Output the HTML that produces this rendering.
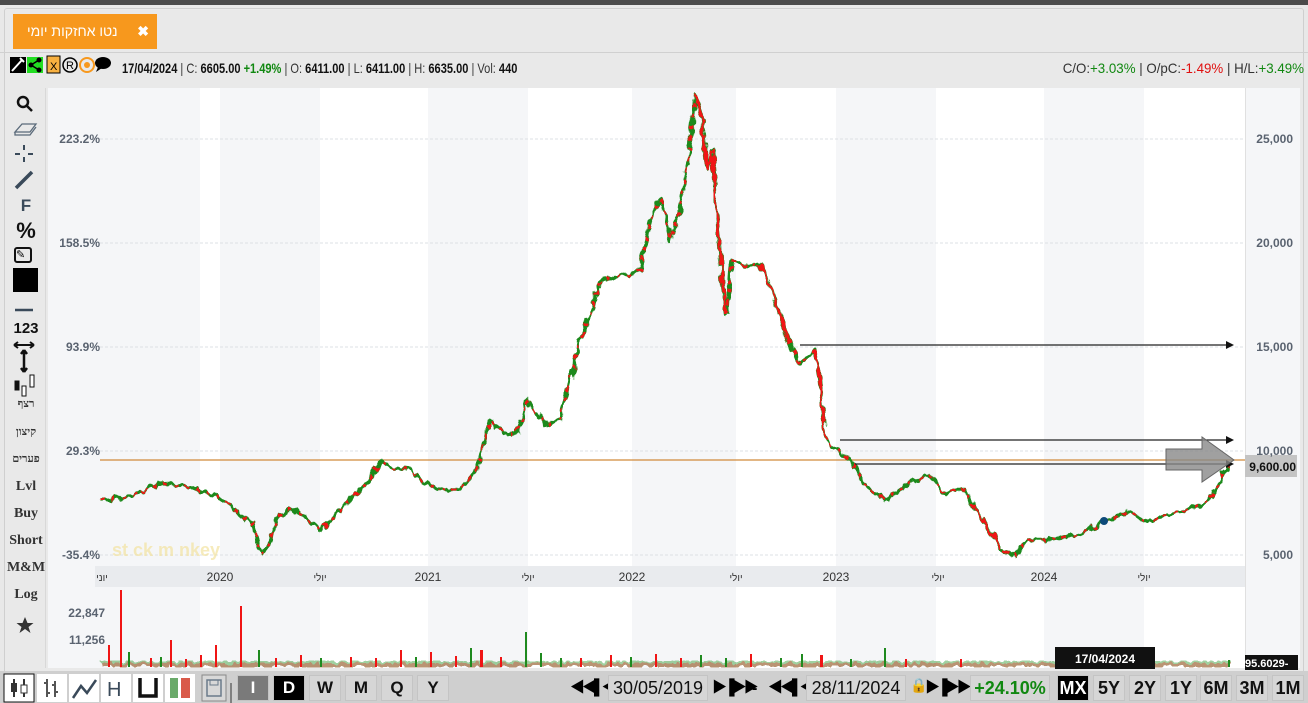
<!DOCTYPE html>
<html><head><meta charset="utf-8"><style>
*{margin:0;padding:0;box-sizing:border-box}
body{width:1308px;height:703px;overflow:hidden;background:#e8e8e8;font-family:"Liberation Sans","Noto Sans CJK JP",sans-serif;position:relative}
.abs{position:absolute}
.topbar{left:0;top:0;width:1308px;height:5px;background:#4a4a4a}
.tab{left:13px;top:14px;width:144px;height:35px;background:#f7981d;color:#fff;font-size:14px;line-height:35px}
.info{top:60px;font-size:14px;color:#333;white-space:nowrap}
.info b{color:#111}
.info .g{color:#118811}.info .r{color:#e01010}
.lt{left:6px;width:40px;text-align:center;font-family:"Liberation Serif",serif;font-weight:bold;font-size:14px;color:#333}
.bb{top:675px;height:26px;background:#d6d6d6;border:1px solid #c4c4c4;font-weight:bold;font-size:17px;text-align:center;line-height:24px;color:#111}
</style></head><body>
<div class="abs topbar"></div>
<div class="abs" style="left:4px;top:8px;width:1300px;height:695px;border:1px solid #cfcfcf;border-radius:3px;background:#e9e9e9"></div>
<div class="abs tab"><span style="position:absolute;left:14px">נטו אחזקות יומי</span><span style="position:absolute;right:8px;font-weight:bold">✖</span></div>
<div class="abs" style="left:0;top:52px;width:1308px;height:1px;background:#d0d0d0"></div>
<svg class="abs" style="left:10px;top:55px" width="112" height="20">
<rect x="0" y="2" width="16" height="16" fill="#000"/><path d="M2 16 L12 5 M10 3 l4 4" stroke="#fff" stroke-width="2"/>
<rect x="17" y="2" width="16" height="16" fill="#22dd22"/><circle cx="21" cy="10" r="2.5"/><circle cx="29" cy="5" r="2.5"/><circle cx="29" cy="15" r="2.5"/><path d="M21 10L29 5M21 10L29 15" stroke="#000" stroke-width="1.5"/>
<rect x="37" y="1" width="13" height="17" fill="#f7b040" stroke="#000"/><text x="40" y="15" font-size="11" font-family="Liberation Sans">X</text>
<circle cx="60" cy="10" r="7" fill="none" stroke="#000" stroke-width="1.5"/><text x="56" y="14" font-size="11" font-family="Liberation Sans">R</text>
<circle cx="77" cy="10" r="7" fill="none" stroke="#f7981d" stroke-width="2"/><circle cx="77" cy="10" r="3" fill="#f7981d"/>
<ellipse cx="93" cy="8" rx="8" ry="6"/><path d="M88 12 L86 17 L92 13z"/>
</svg>
<div class="abs info" style="left:122px;transform:scaleX(0.79);transform-origin:0 0"><b>17/04/2024</b> | C: <b>6605.00</b> <b class="g">+1.49%</b> | O: <b>6411.00</b> | L: <b>6411.00</b> | H: <b>6635.00</b> | Vol: <b>440</b></div>
<div class="abs info" style="right:4px;transform:scaleX(0.95);transform-origin:100% 0">C/O:<span class="g">+3.03%</span> | O/pC:<span class="r">-1.49%</span> | H/L:<span class="g">+3.49%</span></div>
<div class="abs" style="left:48px;top:88px;width:1252px;height:580px;background:#fff"></div>
<div class="abs" style="left:48px;top:88px;width:52px;height:580px;background:#f5f6f8"></div>
<div class="abs" style="left:1245px;top:88px;width:55px;height:580px;background:#f5f6f8;border-left:1px solid #e0e0e0"></div>
<svg class="abs" style="left:0;top:0" width="1308" height="703">
<defs>
<filter id="jit" x="-5%" y="-5%" width="110%" height="110%"><feTurbulence type="fractalNoise" baseFrequency="0.15 0.08" numOctaves="2" seed="3"/><feDisplacementMap in="SourceGraphic" scale="9" xChannelSelector="R" yChannelSelector="G"/></filter>
</defs>
<g fill="#f5f6f8">
<rect x="100" y="88" width="100" height="580"/><rect x="220" y="88" width="100" height="580"/><rect x="428" y="88" width="100" height="580"/><rect x="632" y="88" width="104" height="580"/><rect x="836" y="88" width="100" height="580"/><rect x="1044" y="88" width="100" height="580"/>
</g>
<rect x="95" y="566" width="1150" height="21" fill="#e9ebee"/>
<g stroke="#dde0e4" stroke-dasharray="3,2"><line x1="100" y1="139" x2="1245" y2="139"/><line x1="100" y1="243" x2="1245" y2="243"/><line x1="100" y1="347" x2="1245" y2="347"/><line x1="100" y1="451" x2="1245" y2="451"/><line x1="100" y1="555" x2="1245" y2="555"/></g>
<line x1="100" y1="460" x2="1245" y2="460" stroke="#d08a3a" stroke-width="1.2"/>
<g filter="url(#jit)">
<polyline id="pl" fill="none" stroke="#1f8a1f" stroke-width="3.5" stroke-linejoin="round" points="100,500 120,498 140,493 155,485 170,484 185,486 200,490 215,495 240,515 252,522 262,555 270,540 280,515 290,510 305,515 320,530 335,515 350,500 365,485 380,462 395,468 410,470 425,482 440,490 460,490 470,478 480,460 490,420 500,430 510,435 518,432 525,400 535,410 545,425 560,420 565,400 570,380 580,340 590,315 600,280 610,278 620,275 630,275 640,270 650,220 660,200 665,215 670,240 680,210 690,150 695,95 702,120 708,170 712,150 718,230 722,280 726,315 732,260 745,265 760,265 768,280 775,300 785,330 790,345 800,365 808,355 815,350 820,380 824,420 826,440 834,448 840,450 850,460 860,475 870,490 885,500 900,490 915,480 930,475 945,495 955,490 965,490 975,510 985,522 990,530 1000,550 1015,555 1030,540 1045,540 1060,538 1075,535 1090,530 1100,522 1110,520 1120,515 1130,512 1140,518 1150,522 1160,518 1170,515 1180,512 1190,508 1200,508 1210,500 1215,492 1220,480 1225,470 1230,462"/>
<polyline fill="none" stroke="#f01515" stroke-width="2.5" stroke-dasharray="4,7" stroke-linejoin="round" points="100,500 120,498 140,493 155,485 170,484 185,486 200,490 215,495 240,515 252,522 262,555 270,540 280,515 290,510 305,515 320,530 335,515 350,500 365,485 380,462 395,468 410,470 425,482 440,490 460,490 470,478 480,460 490,420 500,430 510,435 518,432 525,400 535,410 545,425 560,420 565,400 570,380 580,340 590,315 600,280 610,278 620,275 630,275 640,270 650,220 660,200 665,215 670,240 680,210 690,150 695,95 702,120 708,170 712,150 718,230 722,280 726,315 732,260 745,265 760,265 768,280 775,300 785,330 790,345 800,365 808,355 815,350 820,380 824,420 826,440 834,448 840,450 850,460 860,475 870,490 885,500 900,490 915,480 930,475 945,495 955,490 965,490 975,510 985,522 990,530 1000,550 1015,555 1030,540 1045,540 1060,538 1075,535 1090,530 1100,522 1110,520 1120,515 1130,512 1140,518 1150,522 1160,518 1170,515 1180,512 1190,508 1200,508 1210,500 1215,492 1220,480 1225,470 1230,462"/>
<polyline fill="none" stroke="#f01515" stroke-width="2.5" points="695,95 702,120 708,170 712,150 718,230 722,280 726,315"/>
<polyline fill="none" stroke="#f01515" stroke-width="2.5" points="760,265 768,280 775,300 785,330 790,345"/>
<polyline fill="none" stroke="#f01515" stroke-width="2.5" points="815,350 820,380 824,420 826,440"/>
<polyline fill="none" stroke="#f01515" stroke-width="2.5" points="975,510 985,522 990,530 1000,550"/>
</g>
<circle cx="1104" cy="521" r="4" fill="#0d4a7a"/>
<g stroke="#222" stroke-width="1.2"><line x1="800" y1="345" x2="1228" y2="345"/><line x1="840" y1="440" x2="1228" y2="440"/><line x1="855" y1="464" x2="1228" y2="464"/></g>
<g fill="#111"><path d="M1226 341l8 4-8 4z"/><path d="M1226 436l8 4-8 4z"/><path d="M1226 460l8 4-8 4z"/></g>
<path d="M1166 449 H1202 V437 L1234 460 L1202 482 V470 H1166z" fill="#888" fill-opacity="0.8" stroke="#666"/>
<rect x="1245" y="455" width="52" height="22" fill="#c4c4c4"/>
<text x="1296" y="471" text-anchor="end" font-size="12" font-weight="bold" fill="#111" font-family="Liberation Sans">9,600.00</text>
<g font-family="Liberation Sans" font-size="12" font-weight="bold" fill="#5a6370" text-anchor="end">
<text x="100" y="143">223.2%</text><text x="100" y="247">158.5%</text><text x="100" y="351">93.9%</text><text x="100" y="455">29.3%</text><text x="100" y="559">-35.4%</text>
<text x="1293" y="143">25,000</text><text x="1293" y="247">20,000</text><text x="1293" y="351">15,000</text><text x="1293" y="455">10,000</text><text x="1293" y="559">5,000</text>
<text x="105" y="617">22,847</text><text x="105" y="644">11,256</text>
</g>
<g font-family="Liberation Sans,Noto Sans CJK JP" font-size="12" fill="#333" text-anchor="middle">
<text x="102" y="581" font-size="10">יוני</text><text x="220" y="581">2020</text><text x="320" y="581" font-size="10">יולי</text><text x="428" y="581">2021</text><text x="528" y="581" font-size="10">יולי</text><text x="632" y="581">2022</text><text x="736" y="581" font-size="10">יולי</text><text x="836" y="581">2023</text><text x="938" y="581" font-size="10">יולי</text><text x="1044" y="581">2024</text><text x="1144" y="581" font-size="10">יולי</text>
</g>
<text x="112" y="556" font-family="Liberation Sans" font-size="18" font-weight="bold" fill="#f3e3a0" opacity="0.7">st  ck m  nkey</text>
<g filter="url(#jit)">
<rect x="100" y="661" width="1130" height="6" fill="#2a9a2a" opacity="0.45"/>
<rect x="100" y="663" width="1130" height="4" fill="#ee2020" opacity="0.35"/>
</g>
<g fill="#f01515">
<rect x="120" y="590" width="2" height="77"/><rect x="240" y="606" width="2" height="61"/><rect x="108" y="645" width="2" height="22"/><rect x="170" y="640" width="2" height="27"/><rect x="215" y="645" width="2" height="22"/><rect x="200" y="655" width="2" height="12"/><rect x="300" y="655" width="2" height="12"/><rect x="400" y="650" width="2" height="17"/><rect x="430" y="652" width="2" height="15"/><rect x="480" y="650" width="3" height="17"/><rect x="610" y="655" width="2" height="12"/><rect x="655" y="654" width="2" height="13"/><rect x="750" y="654" width="2" height="13"/><rect x="820" y="655" width="3" height="12"/><rect x="1060" y="658" width="2" height="9"/>
<rect x="150" y="658" width="2" height="9"/><rect x="185" y="659" width="2" height="8"/><rect x="275" y="658" width="2" height="9"/><rect x="350" y="657" width="2" height="10"/><rect x="375" y="658" width="2" height="9"/><rect x="455" y="656" width="2" height="11"/><rect x="500" y="657" width="2" height="10"/><rect x="580" y="658" width="2" height="9"/><rect x="680" y="658" width="2" height="9"/><rect x="905" y="659" width="2" height="8"/><rect x="960" y="659" width="2" height="8"/>
</g>
<g fill="#1f8a1f">
<rect x="525" y="632" width="2" height="35"/><rect x="128" y="652" width="2" height="15"/><rect x="258" y="650" width="2" height="17"/><rect x="470" y="648" width="2" height="19"/><rect x="540" y="653" width="2" height="14"/><rect x="700" y="655" width="2" height="12"/><rect x="801" y="654" width="2" height="13"/><rect x="884" y="648" width="2" height="19"/><rect x="1228" y="660" width="2" height="7"/>
<rect x="160" y="657" width="2" height="10"/><rect x="320" y="658" width="2" height="9"/><rect x="415" y="657" width="2" height="10"/><rect x="560" y="658" width="2" height="9"/><rect x="630" y="657" width="2" height="10"/><rect x="725" y="658" width="2" height="9"/><rect x="780" y="658" width="2" height="9"/><rect x="850" y="659" width="2" height="8"/>
</g>
<rect x="1055" y="647" width="100" height="22" fill="#111"/>
<text x="1105" y="663" text-anchor="middle" font-family="Liberation Sans" font-size="12" font-weight="bold" fill="#fff">17/04/2024</text>
<rect x="1245" y="655" width="53" height="15" fill="#111"/>
<text x="1245" y="667" font-family="Liberation Sans" font-size="11" font-weight="bold" fill="#fff">95.6029-</text>
<g fill="none" stroke="#111" stroke-width="2.5"><circle cx="23" cy="102" r="5"/><line x1="27" y1="106" x2="32" y2="111"/></g>
<path d="M15 132 L22 124 H36 L30 132z M15 132 v3 h15 l6-8" fill="none" stroke="#5a6a7a" stroke-width="1.3"/>
<g stroke="#3a4a5a" stroke-width="2"><line x1="24" y1="145" x2="24" y2="150"/><line x1="24" y1="157" x2="24" y2="162"/><line x1="15" y1="154" x2="20" y2="154"/><line x1="28" y1="154" x2="33" y2="154"/></g>
<line x1="16" y1="188" x2="32" y2="172" stroke="#3a4a5a" stroke-width="3.5"/>
<rect x="13" y="268" width="25" height="24" fill="#000"/>
<line x1="15" y1="310" x2="33" y2="310" stroke="#3a4a5a" stroke-width="2.5"/>
<path d="M14 345 H34 M14 345 l4-3 M14 345 l4 3 M34 345 l-4-3 M34 345 l-4 3" stroke="#111" stroke-width="2"/>
<path d="M24 350 V372 M24 350 l-3 4 M24 350 l3 4 M24 372 l-3-4 M24 372 l3-4" stroke="#111" stroke-width="2.5"/>
<g stroke="#111"><rect x="15" y="381" width="4" height="9" fill="#111"/><rect x="22" y="386" width="4" height="10" fill="#fff"/><rect x="30" y="375" width="4" height="12" fill="#fff"/></g>
<path d="M25 617l2.5 6h6l-5 4 2 6-5.5-4-5.5 4 2-6-5-4h6z" fill="#333"/>
</svg>
<div class="abs" style="left:6px;top:88px;width:40px;height:580px;border-right:1px solid #d8d8d8"></div>
<div class="abs lt" style="top:196px;font-family:'Liberation Sans';font-size:17px;color:#3a4a5a">F</div>
<div class="abs lt" style="top:218px;font-family:'Liberation Sans';font-size:22px;color:#111">%</div>
<div class="abs" style="left:14px;top:247px;width:18px;height:16px;border:2px solid #111;border-radius:3px;font-size:11px;line-height:12px">✎</div>
<div class="abs lt" style="top:320px;font-family:'Liberation Sans';font-size:15px;color:#111">123</div>
<div class="abs lt" style="top:398px;font-size:11px">רצף</div>
<div class="abs lt" style="top:426px;font-size:11px">קיצון</div>
<div class="abs lt" style="top:453px;font-size:11px">פערים</div>
<div class="abs lt" style="top:479px">Lvl</div>
<div class="abs lt" style="top:506px">Buy</div>
<div class="abs lt" style="top:533px">Short</div>
<div class="abs lt" style="top:560px">M&amp;M</div>
<div class="abs lt" style="top:587px">Log</div>
<div class="abs" style="left:0;top:671px;width:1308px;height:32px;background:#cfcfcf"></div>
<svg class="abs" style="left:0;top:673px" width="240" height="30">
<rect x="4" y="1" width="30" height="28" fill="#fff" stroke="#111"/><g stroke="#333" stroke-width="2"><line x1="14" y1="6" x2="14" y2="24"/><line x1="24" y1="6" x2="24" y2="24"/></g><rect x="11" y="10" width="6" height="9" fill="#333"/><rect x="21" y="12" width="6" height="8" fill="#fff" stroke="#333"/>
<rect x="37" y="1" width="30" height="28" fill="#fff"/><path d="M47 6V24M44 10h3M47 20h3M55 8V24M52 12h3M55 19h3" stroke="#555" stroke-width="2"/>
<rect x="69" y="1" width="30" height="28" fill="#fff"/><path d="M73 25 L81 13 L87 20 L96 7" fill="none" stroke="#3a4a5a" stroke-width="2.5"/>
<rect x="101" y="1" width="30" height="28" fill="#fff"/><text x="107" y="23" font-family="Liberation Sans" font-size="20" fill="#3a4a5a">H</text>
<rect x="133" y="1" width="30" height="28" fill="#fff"/><path d="M140 5V23H156V5" fill="none" stroke="#111" stroke-width="3.5"/>
<rect x="165" y="1" width="30" height="28" fill="#fff"/><rect x="170" y="5" width="8" height="20" fill="#6aaa6a"/><rect x="181" y="5" width="9" height="20" fill="#d95a4a"/>
<rect x="202" y="2" width="24" height="26" fill="#d8d8d8" stroke="#888"/><rect x="207" y="7" width="14" height="16" fill="none" stroke="#6a7a8a" stroke-width="1.5"/><rect x="210" y="7" width="8" height="5" fill="none" stroke="#6a7a8a"/>
<line x1="231" y1="10" x2="231" y2="30" stroke="#333"/>
</svg>
<div class="abs bb" style="left:237px;width:32px;background:#7a7a7a;color:#fff">I</div>
<div class="abs bb" style="left:273px;width:32px;background:#000;color:#fff">D</div>
<div class="abs bb" style="left:309px;width:32px">W</div>
<div class="abs bb" style="left:345px;width:32px">M</div>
<div class="abs bb" style="left:381px;width:32px">Q</div>
<div class="abs bb" style="left:417px;width:32px">Y</div>
<div class="abs" style="left:570px;top:676px;font-size:15px;font-weight:bold;letter-spacing:-3px">◀◀▌◀</div>
<div class="abs bb" style="left:608px;width:100px;font-weight:normal;font-size:18px">30/05/2019</div>
<div class="abs" style="left:712px;top:676px;font-size:15px;font-weight:bold;letter-spacing:-3px">▶▐▶▶</div>
<div class="abs" style="left:752px;top:680px;font-weight:bold">-</div>
<div class="abs" style="left:768px;top:676px;font-size:15px;font-weight:bold;letter-spacing:-3px">◀◀▌◀</div>
<div class="abs bb" style="left:806px;width:100px;font-weight:normal;font-size:18px">28/11/2024</div>
<div class="abs" style="left:910px;top:677px;font-size:14px;color:#118811">🔒</div>
<div class="abs" style="left:925px;top:676px;font-size:15px;font-weight:bold;letter-spacing:-3px">▶▐▶▶</div>
<div class="abs bb" style="left:970px;width:80px;color:#118811;font-size:18px">+24.10%</div>
<div class="abs bb" style="left:1057px;width:32px;background:#000;color:#fff;font-size:18px">MX</div>
<div class="abs bb" style="left:1093px;width:32px;font-size:18px">5Y</div>
<div class="abs bb" style="left:1129px;width:32px;font-size:18px">2Y</div>
<div class="abs bb" style="left:1165px;width:32px;font-size:18px">1Y</div>
<div class="abs bb" style="left:1200px;width:32px;font-size:18px">6M</div>
<div class="abs bb" style="left:1236px;width:32px;font-size:18px">3M</div>
<div class="abs bb" style="left:1272px;width:32px;font-size:18px">1M</div>
</body></html>
